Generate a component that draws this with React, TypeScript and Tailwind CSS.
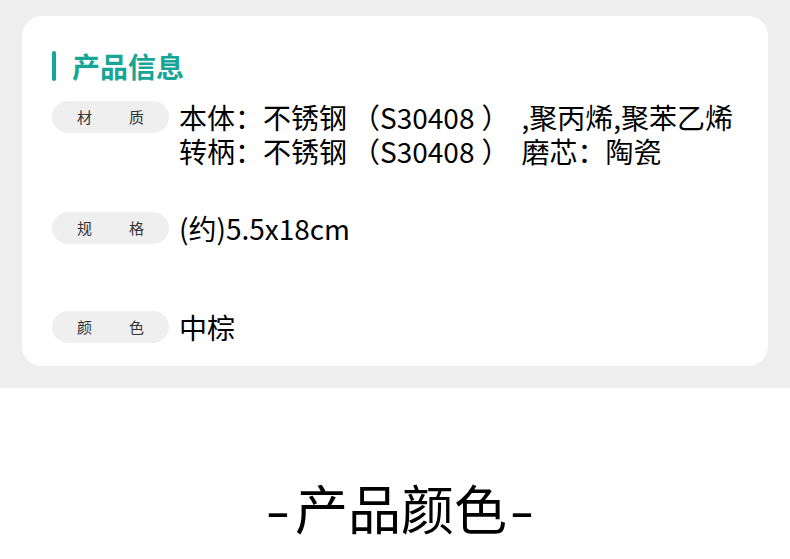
const font = { fontFamily: '"Noto Sans CJK SC", "Noto Sans", sans-serif' };

type Row = { label: [string, string]; lines: React.ReactNode[]; mt: string };

// the brackets in the source image sit a little further out than the font's own
const Code = () => (
  <>
    <span className="ml-[5px]">（</span>S30408
    <span className="ml-[7px] mr-[12px]">）</span>
  </>
);

const rows: Row[] = [
  {
    label: ['材', '质'],
    lines: [
      <>本体：不锈钢<Code />,聚丙烯,聚苯乙烯</>,
      <>转柄：不锈钢<Code />磨芯：陶瓷</>,
    ],
    mt: 'mt-[20px]',
  },
  { label: ['规', '格'], lines: ['(约)5.5x18cm'], mt: 'mt-[44px]' },
  { label: ['颜', '色'], lines: ['中棕'], mt: 'mt-[66px]' },
];

const InfoRow = ({ row }: { row: Row }) => (
  <div className={`flex items-start ${row.mt}`}>
    <div className="flex h-8 w-[117px] shrink-0 items-center justify-between rounded-full bg-[#efeff0] px-[25px] text-[15px] text-[#333]">
      <span>{row.label[0]}</span>
      <span>{row.label[1]}</span>
    </div>
    <div className="ml-[10px] -mt-[1px] text-[28px] leading-[34px] text-black">
      {row.lines.map((l, i) => (
        <div key={i} className="whitespace-nowrap">{l}</div>
      ))}
    </div>
  </div>
);

const App = () => {
  return (
    <div className="h-[559px] w-[790px] overflow-hidden bg-white" style={font}>
      <div className="bg-[#eeeeee] px-[22px] pt-4 pb-[22px]">
        <div className="rounded-[20px] bg-white pt-[35px] pr-4 pb-[22px] pl-[30px]">
          <div className="flex h-[30px] items-center">
            <div className="h-[30px] w-[4px] rounded-full bg-[#17a595]" />
            <div className="ml-4 text-[28px] leading-[30px] font-bold text-[#17a595]">产品信息</div>
          </div>
          {rows.map((r, i) => (
            <InfoRow key={i} row={r} />
          ))}
        </div>
      </div>
      <div className="mt-[91px] flex items-center justify-center pl-[10px] text-[53px] leading-[56px] text-black">
        <span className="inline-block w-[20px] scale-x-[1.35] text-center">-</span>
        <span className="ml-[7px] mr-[5px]">产品颜色</span>
        <span className="inline-block w-[20px] scale-x-[1.35] text-center">-</span>
      </div>
    </div>
  );
};

export default App;
